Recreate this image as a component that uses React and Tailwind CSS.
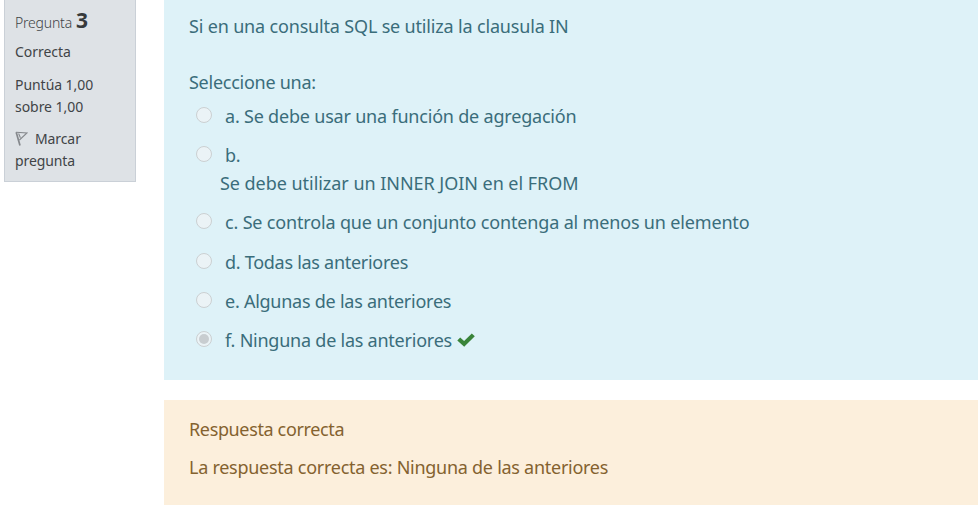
function Radio({ checked }) {
  return (
    <span className="mt-[5px] ml-[7px] flex h-4 w-4 shrink-0 items-center justify-center rounded-full border border-[#cbd0d2] bg-[#ebf3f6]">
      {checked && <span className="h-[10px] w-[10px] rounded-full bg-[#c8cdd0]" />}
    </span>
  );
}

function Option({ children, checked, className = "" }) {
  return (
    <div className={`flex h-7 ${className}`}>
      <Radio checked={checked} />
      <div className="ml-[13px] flex items-center whitespace-nowrap">{children}</div>
    </div>
  );
}

function Flag() {
  return (
    <svg className="mr-[7px] inline-block h-[15px] w-[13px] align-[-2px]" viewBox="0 0 13 15" fill="none" stroke="#85888c" strokeWidth="1.1">
      <path d="M1.2 1.2 5 14.5" strokeWidth="1.7" />
      <path d="M1 1.3 12 2 4.4 9M3.6 2.5 5.4 6.8" />
    </svg>
  );
}

export default function App() {
  return (
    <div className="flex h-[517px] w-[978px] overflow-hidden bg-white font-['Noto_Sans','Open_Sans',sans-serif]">
      <aside className="ml-1 h-[182px] w-[132px] shrink-0 border border-t-0 border-[#cad0d7] bg-[#dee2e6] pl-[10px] text-[14px] leading-[22px] text-[#414447]">
        <h3 className="flex h-[41px] items-baseline pt-[8px] leading-[24px]">
          <span className="font-light tracking-[-0.2px]">Pregunta</span>
          <span className="ml-1 text-[21px] font-bold text-[#373a3c]">3</span>
        </h3>
        <p className="h-[33px] tracking-[-0.05px]">Correcta</p>
        <p className="h-[54px] tracking-[-0.05px]">Puntúa 1,00<br />sobre 1,00</p>
        <p className="tracking-[-0.1px]"><Flag />Marcar<br />pregunta</p>
      </aside>
      <main className="ml-7 flex-1 text-[18px] leading-7 whitespace-nowrap">
        <section className="h-[380px] bg-[#def2f8] pt-[12px] pl-[25px] text-[#3a6d7b]">
          <p className="h-14"><span className="tracking-[-0.17px]">Si en una consulta SQL se utiliza la clausula IN</span></p>
          <p className="h-[34px]"><span className="tracking-[-0.26px]">Seleccione una:</span></p>
          <Option className="mb-[11px]"><span className="tracking-[-0.2px]">a. Se debe usar una función de agregación</span></Option>
          <Option><span className="tracking-[-0.2px]">b.</span></Option>
          <p className="mb-[11px] h-7 pl-[31px]"><span className="tracking-[-0.04px]">Se debe utilizar un INNER JOIN en el FROM</span></p>
          <Option className="mb-[12px]"><span className="tracking-[-0.165px]">c. Se controla que un conjunto contenga al menos un elemento</span></Option>
          <Option className="mb-[11px]"><span className="tracking-[-0.28px]">d. Todas las anteriores</span></Option>
          <Option className="mb-[11px]"><span className="tracking-[-0.25px]">e. Algunas de las anteriores</span></Option>
          <Option checked>
            <span className="tracking-[-0.235px]">f. Ninguna de las anteriores</span>
            <svg className="ml-[5px] h-[14px] w-[18px]" viewBox="0 0 18 14" fill="#398439">
              <path d="M.3 7.4 3.2 4.5 7.1 8 14.8.4 17.8 3.3 7.2 13.8Z" />
            </svg>
          </Option>
        </section>
        <section className="mt-5 h-[105px] bg-[#fcefdc] pt-[15px] pl-[25px] text-[#84622f]">
          <p className="h-[38px]"><span className="tracking-[-0.36px]">Respuesta correcta</span></p>
          <p><span className="tracking-[-0.27px]">La respuesta correcta es: Ninguna de las anteriores</span></p>
        </section>
      </main>
    </div>
  );
}
